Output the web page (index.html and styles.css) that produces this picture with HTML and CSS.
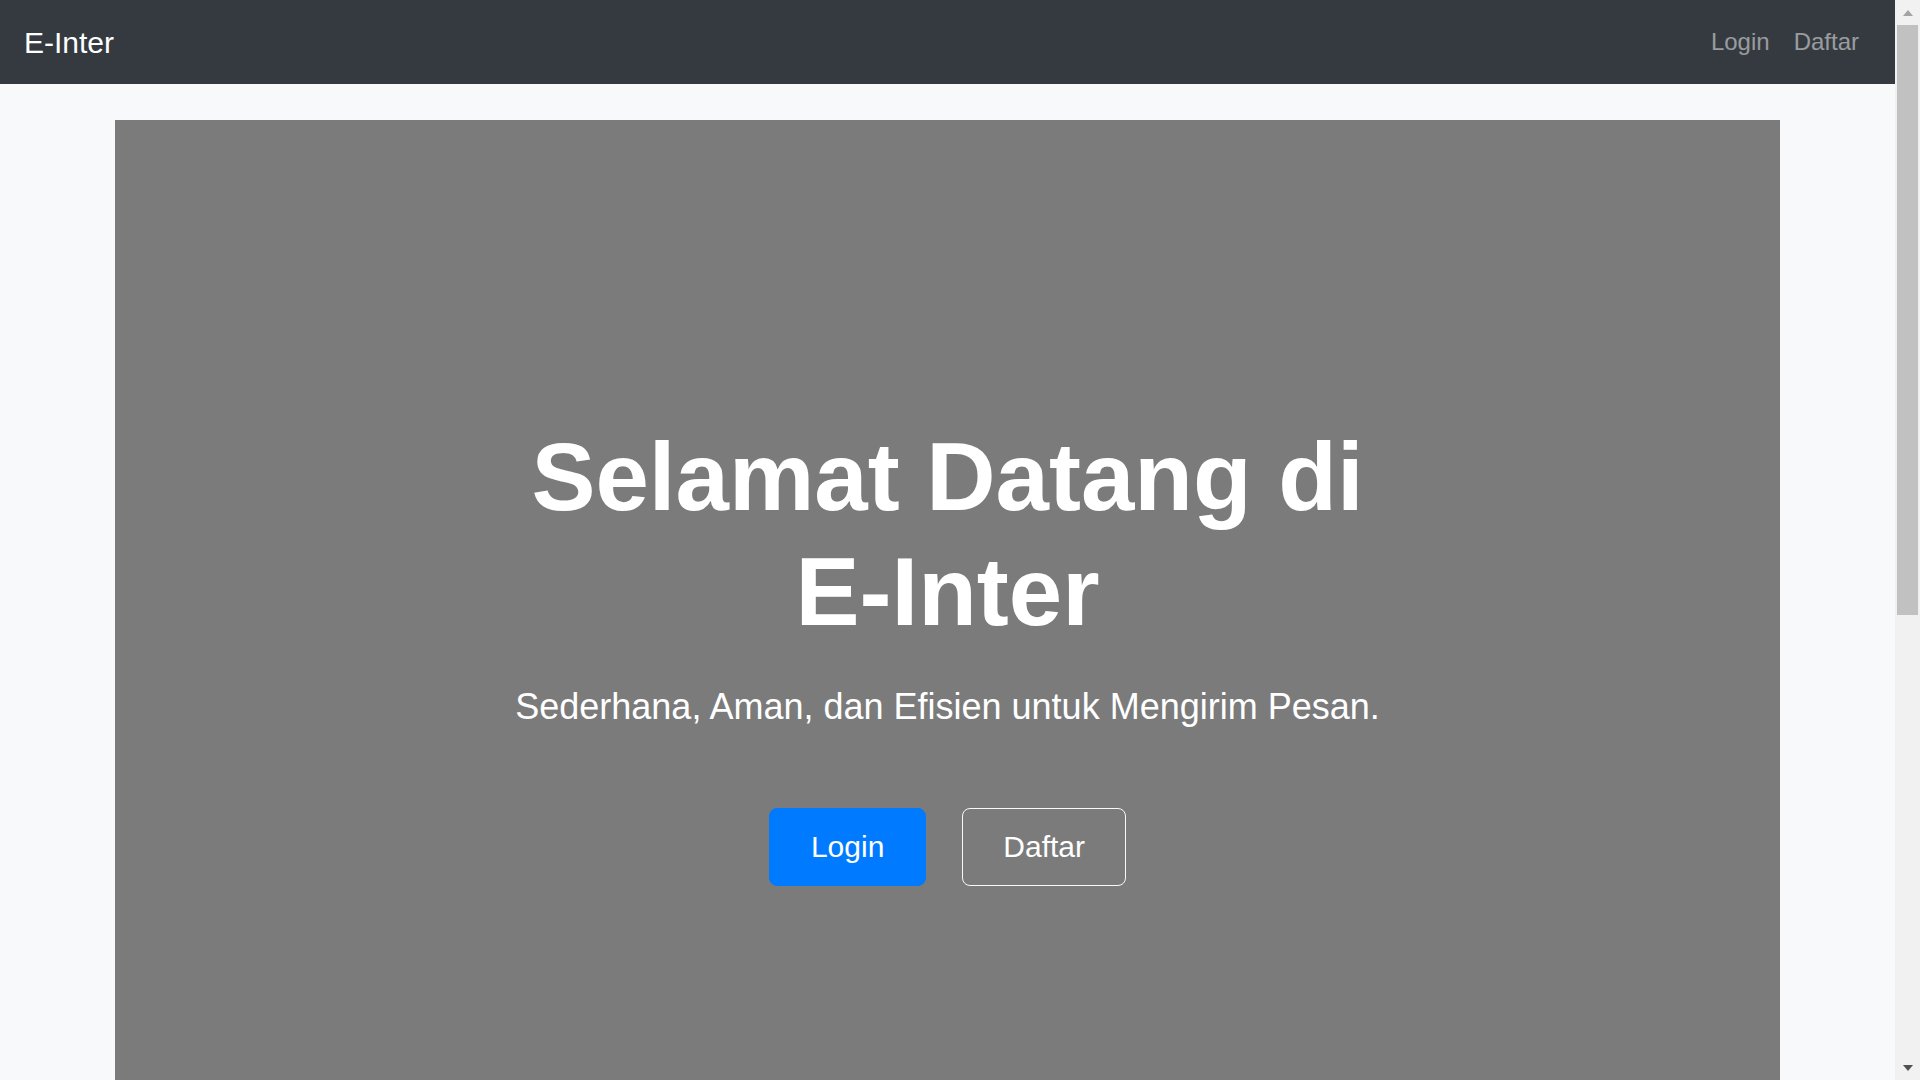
FILE: index.html
```html
<!DOCTYPE html>
<html lang="id">
<head>
<meta charset="utf-8">
<title>E-Inter</title>
<link rel="stylesheet" href="styles.css">
</head>
<body>
<div class="app">
  <div class="main">
    <nav class="navbar">
      <a class="brand" href="#">E-Inter</a>
      <div class="nav-links">
        <a class="nav-link" href="#">Login</a>
        <a class="nav-link" href="#">Daftar</a>
      </div>
    </nav>
    <div class="container">
      <section class="hero">
        <h1 class="hero-title">Selamat Datang di <span class="nowrap">E-Inter</span></h1>
        <p class="lead">Sederhana, Aman, dan Efisien untuk Mengirim Pesan.</p>
        <div class="actions">
          <a class="btn btn-primary" href="#">Login</a>
          <a class="btn btn-outline" href="#">Daftar</a>
        </div>
      </section>
    </div>
  </div>
  <div class="scrollbar">
    <div class="sb-button"><span class="arrow-up"></span></div>
    <div class="sb-track"><div class="sb-thumb"></div></div>
    <div class="sb-button"><span class="arrow-down"></span></div>
  </div>
</div>
</body>
</html>
```
FILE: styles.css
```css
html, body {
  margin: 0;
  padding: 0;
  height: 1080px;
  overflow: hidden;
}
body {
  font-family: "Liberation Sans", Arial, Helvetica, sans-serif;
  background: #f8f9fa;
  color: #212529;
}
a { text-decoration: none; }

.app {
  display: flex;
  height: 1080px;
}
.main {
  flex: 1;
  overflow: hidden;
}

.navbar {
  height: 84px;
  box-sizing: border-box;
  background: #343a40;
  display: flex;
  align-items: center;
  justify-content: space-between;
  padding: 0 24px;
}
.brand {
  color: #ffffff;
  font-size: 30px;
  line-height: 45px;
  padding-top: 1px;
}
.nav-links {
  display: flex;
}
.nav-link {
  color: rgba(255, 255, 255, 0.5);
  font-size: 24px;
  line-height: 36px;
  padding: 0 12px;
}

.container {
  max-width: 1665px;
  margin: 36px auto 0;
}
.hero {
  background: #7b7b7b;
  height: 1080px;
  box-sizing: border-box;
  padding-top: 299px;
  text-align: center;
  color: #ffffff;
}
.hero-title {
  max-width: 900px;
  margin: 0 auto 31px;
  font-size: 96px;
  font-weight: 700;
  line-height: 115.2px;
}
.nowrap {
  white-space: nowrap;
}
.lead {
  margin: 0 0 74px;
  font-size: 36px;
  line-height: 54px;
}
.actions {
  display: flex;
  justify-content: center;
  gap: 36px;
}
.btn {
  display: inline-block;
  font-size: 30px;
  line-height: 46px;
  padding: 15px 40px;
  border: 1px solid transparent;
  border-radius: 8px;
  color: #ffffff;
}
.btn-primary {
  background: #007bff;
  border-color: #007bff;
  padding: 15px 41px;
}
.btn-outline {
  background: transparent;
  border-color: #f8f9fa;
  padding: 15px 40px;
}

.scrollbar {
  width: 25px;
  background: #f1f1f1;
  display: flex;
  flex-direction: column;
}
.sb-button {
  height: 25px;
  display: flex;
  align-items: center;
  justify-content: center;
}
.arrow-up {
  width: 0;
  height: 0;
  border-left: 5.5px solid transparent;
  border-right: 5.5px solid transparent;
  border-bottom: 6px solid #a3a3a3;
}
.arrow-down {
  width: 0;
  height: 0;
  border-left: 5.5px solid transparent;
  border-right: 5.5px solid transparent;
  border-top: 6px solid #505050;
}
.sb-track {
  flex: 1;
}
.sb-thumb {
  height: 590px;
  margin: 0 2px;
  background: #c1c1c1;
}
```
